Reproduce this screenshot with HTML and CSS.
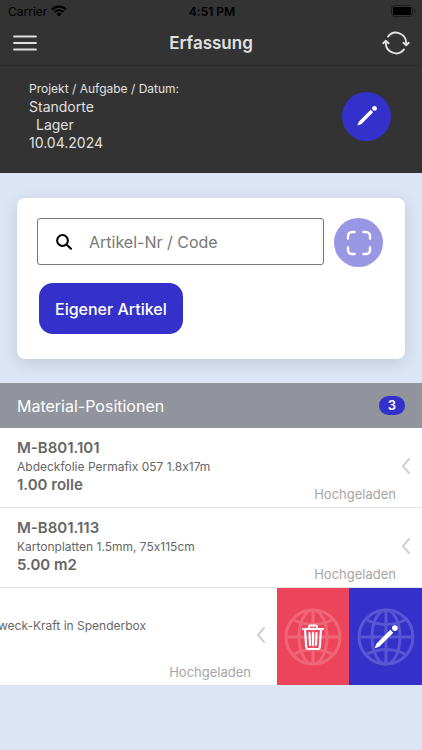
FILE: index.html
```html
<!DOCTYPE html>
<html lang="de">
<head>
<meta charset="utf-8">
<meta name="viewport" content="width=device-width, initial-scale=1">
<title>Erfassung</title>
<link rel="stylesheet" href="styles.css">
</head>
<body>
<svg class="sprite" aria-hidden="true">
  <symbol id="pen" viewBox="0 0 24 24">
    <path d="M16 5.300 18.700 8 6 20.700 2.600 22.200Q1.500 22.500 1.800 21.400L3.300 18Z" fill="currentColor"/>
    <circle cx="20.200" cy="3.800" r="2.600" fill="currentColor"/>
  </symbol>
  <symbol id="globe" viewBox="0 0 58 58">
    <g fill="none" stroke="currentColor" stroke-width="3">
      <circle cx="29" cy="29" r="27"/>
      <ellipse cx="29" cy="29" rx="14" ry="27"/>
      <path d="M29 2v54M2 29h54M10 12q19 9 38 0M10 46q19-9 38 0"/>
    </g>
  </symbol>
  <symbol id="chevron" viewBox="0 0 10 18">
    <path d="M8 2 2 9l6 7" fill="none" stroke="currentColor" stroke-width="2" stroke-linecap="round" stroke-linejoin="round"/>
  </symbol>
</svg>

<header class="top">
  <div class="status">
    <span class="carrier">Carrier
      <svg width="16" height="12" viewBox="0 0 16 12" aria-hidden="true">
        <path d="M1 4.500a10 10 0 0 1 14 0M3.500 7a6.500 6.500 0 0 1 9 0" fill="none" stroke="currentColor" stroke-width="2.100"/>
        <path d="M5.500 9a3.600 3.600 0 0 1 5 0L8 11.600Z" fill="currentColor"/>
      </svg>
    </span>
    <span class="clock">4:51 PM</span>
    <svg class="battery" width="25" height="12" viewBox="0 0 25 12" aria-hidden="true">
      <rect x=".5" y=".5" width="21" height="11" rx="3" fill="none" stroke="#1b1b1b"/>
      <rect x="2" y="2" width="18" height="8" rx="1.500" fill="#000"/>
      <path d="M23 4v4q1.500-.6 1.500-2T23 4Z" fill="#1b1b1b"/>
    </svg>
  </div>
  <div class="nav">
    <button class="icon-btn" aria-label="Menü">
      <svg width="24" height="16" viewBox="0 0 24 16"><path d="M1 1.500h22M1 8h22M1 14.500h22" stroke="currentColor" stroke-width="1.800" stroke-linecap="round"/></svg>
    </button>
    <h1>Erfassung</h1>
    <button class="icon-btn end" aria-label="Aktualisieren">
      <svg width="28" height="24" viewBox="0 0 28 24" fill="none" stroke="currentColor" stroke-width="1.900" stroke-linecap="round" stroke-linejoin="round">
        <path d="M6 5.600A10.200 10.200 0 0 1 24.200 12v1.800M21.400 11.800l2.800 2.400 2.600-2.400M22 18.400A10.200 10.200 0 0 1 3.800 12v-1.800M1.200 12.200l2.600-2.400 2.800 2.400"/>
      </svg>
    </button>
  </div>
</header>

<section class="project">
  <div>
    <p class="caption">Projekt / Aufgabe / Datum:</p>
    <p>Standorte</p>
    <p class="indent">Lager</p>
    <p>10.04.2024</p>
  </div>
  <button class="round" aria-label="Projekt bearbeiten"><svg width="22" height="22"><use href="#pen"/></svg></button>
</section>

<main>
  <form class="card">
    <div class="search-row">
      <label class="search">
        <svg width="16" height="16" viewBox="0 0 16 16" fill="none" stroke="#000" stroke-width="2" stroke-linecap="round" aria-hidden="true"><circle cx="6.500" cy="6.500" r="5.400"/><path d="m10.500 10.500 4.500 4.300"/></svg>
        <input type="text" placeholder="Artikel-Nr / Code" aria-label="Artikel-Nr / Code">
      </label>
      <button type="button" class="round light" aria-label="Code scannen">
        <svg width="26" height="26" viewBox="0 0 26 26" fill="none" stroke="currentColor" stroke-width="2.400" stroke-linecap="round"><path d="M2 8.500V6a4 4 0 0 1 4-4h2.500M17.500 2H20a4 4 0 0 1 4 4v2.500M24 17.500V20a4 4 0 0 1-4 4h-2.500M8.500 24H6a4 4 0 0 1-4-4v-2.500"/></svg>
      </button>
    </div>
    <button type="button" class="primary">Eigener Artikel</button>
  </form>

  <section>
    <div class="list-head">
      <h2>Material-Positionen</h2>
      <span class="badge">3</span>
    </div>
    <ul class="list">
      <li class="item">
        <div class="content">
          <h3>M-B801.101</h3>
          <p>Abdeckfolie Permafix 057 1.8x17m</p>
          <strong>1.00 rolle</strong>
        </div>
        <span class="state">Hochgeladen</span>
        <svg class="chevron" width="10" height="18" aria-hidden="true"><use href="#chevron"/></svg>
      </li>
      <li class="item">
        <div class="content">
          <h3>M-B801.113</h3>
          <p>Kartonplatten 1.5mm, 75x115cm</p>
          <strong>5.00 m2</strong>
        </div>
        <span class="state">Hochgeladen</span>
        <svg class="chevron" width="10" height="18" aria-hidden="true"><use href="#chevron"/></svg>
      </li>
      <li class="swiped">
        <div class="item">
          <div class="content">
            <p>weck-Kraft in Spenderbox</p>
          </div>
          <span class="state">Hochgeladen</span>
          <svg class="chevron" width="10" height="18" aria-hidden="true"><use href="#chevron"/></svg>
        </div>
        <button class="action delete" aria-label="Löschen">
          <svg class="globe" width="58" height="58"><use href="#globe"/></svg>
          <svg width="22" height="26" viewBox="0 0 22 26" fill="none" stroke="currentColor" stroke-width="2" stroke-linecap="round" stroke-linejoin="round"><path d="M1 5h20M7 5V3q0-1.500 1.500-1.500h5Q15 1.500 15 3v2"/><path d="M3 5.500 4.200 23q.2 2 2 2h9.600q1.800 0 2-2L19 5.500M7.500 9l.5 12M11 9v12M14.500 9 14 21" stroke-width="2.200"/></svg>
        </button>
        <button class="action edit" aria-label="Bearbeiten">
          <svg class="globe" width="58" height="58"><use href="#globe"/></svg>
          <svg width="26" height="26"><use href="#pen"/></svg>
        </button>
      </li>
    </ul>
  </section>
</main>
</body>
</html>
```
FILE: styles.css
```css
* { box-sizing: border-box; }

body {
  margin: 0;
  min-height: 100vh;
  background: #dce5f6;
  font-family: Inter, sans-serif;
  font-feature-settings: "calt" 0;
  color: #666;
}

h1, h2, h3, p, ul { margin: 0; padding: 0; }

button {
  border: 0;
  padding: 0;
  font: inherit;
  color: #fff;
  display: grid;
  place-items: center;
  cursor: pointer;
}

.sprite { position: absolute; width: 0; height: 0; }

.top, .project { background: #333; color: #e0e0e0; }
.top { border-bottom: 1px solid #2a2a2a; }

.status, .nav {
  display: grid;
  grid-template-columns: 1fr auto 1fr;
  align-items: center;
}

.status {
  height: 22px;
  padding: 0 6px 0 8px;
  color: #000;
  font-size: 12px;
}
.carrier { display: flex; align-items: center; gap: 4px; }
.clock { font-weight: 600; }
.battery { justify-self: end; }

.nav { height: 43px; padding: 0 12px 2px; }
.nav h1 { font-size: 17px; font-weight: 600; }
.icon-btn { background: none; color: #e0e0e0; width: 26px; height: 32px; }
.icon-btn.end { justify-self: end; width: 28px; }

.project {
  display: flex;
  justify-content: space-between;
  align-items: center;
  padding: 14px 31px 21px 29px;
  font-size: 14px;
  line-height: 18px;
}
.project .caption { font-size: 12px; }
.project .indent { padding-left: 7px; }

.round {
  width: 49px;
  height: 49px;
  flex: none;
  border-radius: 50%;
  background: #3331c9;
}
.round.light { background: #9997e3; }

.card {
  margin: 25px 17px 24px;
  padding: 20px 22px 25px 20px;
  border-radius: 8px;
  background: #fff;
  box-shadow: 0 4px 16px rgba(0, 0, 0, .12);
}
.search-row { display: flex; align-items: flex-start; gap: 10px; margin-bottom: 16px; }
.search {
  flex: 1;
  min-width: 0;
  height: 47px;
  display: flex;
  align-items: center;
  gap: 17px;
  padding: 0 18px;
  border: 1px solid #777;
  border-radius: 3px;
}
.search svg { flex: none; }
.search input {
  flex: 1;
  min-width: 0;
  border: 0;
  padding: 0;
  outline: 0;
  background: none;
  font: 16px Inter, sans-serif;
}
.search input::placeholder { color: #777; opacity: 1; }
.primary {
  margin-left: 2px;
  height: 51px;
  padding: 0 16px;
  border-radius: 14px;
  background: #3331c9;
  font-size: 16px;
  font-weight: 500;
}

.list-head {
  display: flex;
  justify-content: space-between;
  align-items: center;
  height: 45px;
  padding: 0 17px;
  background: #91949c;
  color: #fff;
}
.list-head h2 { font-size: 16px; font-weight: 400; }
.badge {
  padding: 0 9px;
  border-radius: 10px;
  background: #3331c9;
  font-size: 13px;
  font-weight: 600;
  line-height: 19px;
}

.list { list-style: none; }
.item {
  display: flex;
  align-items: center;
  gap: 5px;
  height: 80px;
  padding: 0 11px 3px 17px;
  border-bottom: 1px solid #e4e4e4;
  background: #fff;
}
.content { flex: 1; min-width: 0; line-height: 18px; white-space: nowrap; }
.content h3, .content strong { font-size: 15px; font-weight: 600; }
.content p { font-size: 12px; line-height: 20px; }
.content strong { display: block; line-height: 16px; }
.state {
  align-self: flex-end;
  padding-bottom: 1px;
  color: #a5a5a5;
  font-size: 13px;
  line-height: 18px;
}
.chevron { color: #d0d0d0; flex: none; }

.swiped { display: flex; height: 97px; overflow: hidden; }
.swiped .item { flex: 1; min-width: 0; height: 100%; padding-left: 0; border: 0; }
.swiped .content { align-self: flex-start; margin-left: -2px; padding-top: 28px; }
.action { width: 72px; flex: none; }
.action svg { grid-area: 1 / 1; }
.action.delete { background: #ec445a; }
.action.edit { width: 73px; background: #3331c9; }
.globe { opacity: .18; }
```
